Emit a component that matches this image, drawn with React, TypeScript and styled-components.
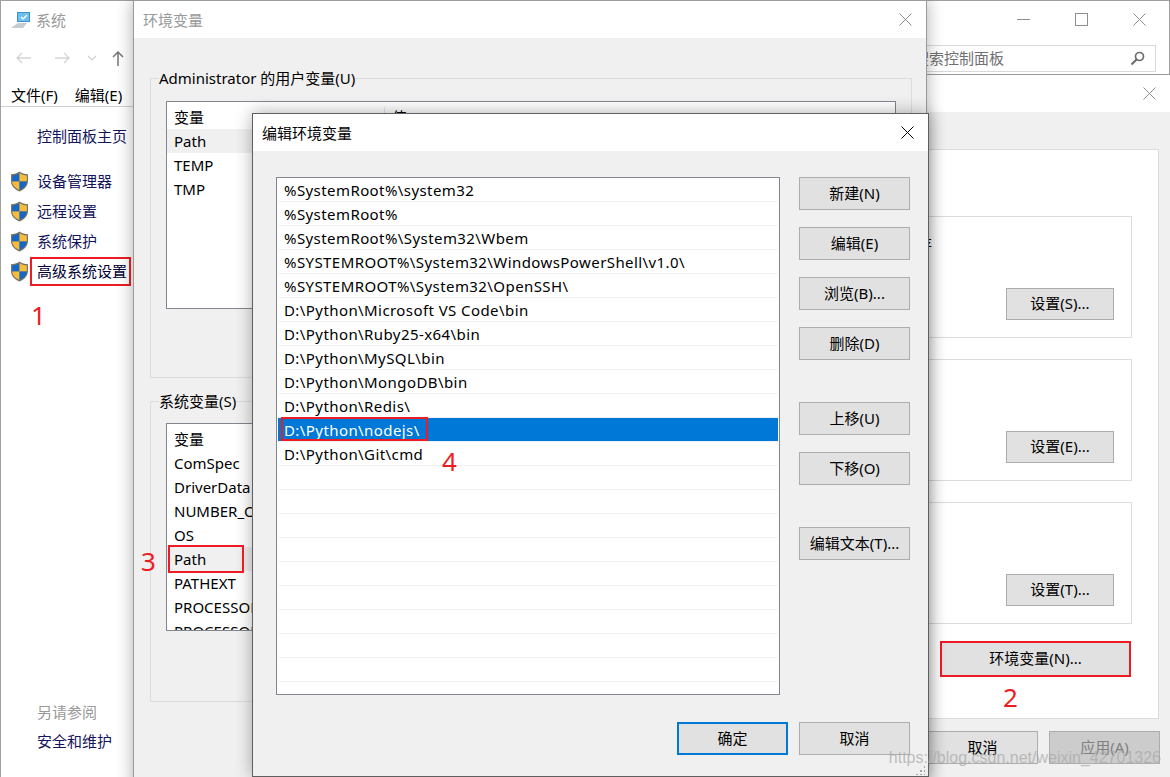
import { FC } from "react";
import styled, { createGlobalStyle } from "styled-components";

const FONT = `"Noto Sans", "Noto Sans CJK SC", sans-serif`;

const PATH_ROWS = [
	"%SystemRoot%\\system32",
	"%SystemRoot%",
	"%SystemRoot%\\System32\\Wbem",
	"%SYSTEMROOT%\\System32\\WindowsPowerShell\\v1.0\\",
	"%SYSTEMROOT%\\System32\\OpenSSH\\",
	"D:\\Python\\Microsoft VS Code\\bin",
	"D:\\Python\\Ruby25-x64\\bin",
	"D:\\Python\\MySQL\\bin",
	"D:\\Python\\MongoDB\\bin",
	"D:\\Python\\Redis\\",
	"D:\\Python\\nodejs\\",
	"D:\\Python\\Git\\cmd",
	"",
	"",
	"",
	"",
	"",
	"",
	"",
	"",
	"",
];

const USER_VARS = ["Path", "TEMP", "TMP"];
const SYSTEM_VARS = [
	"ComSpec",
	"DriverData",
	"NUMBER_OF_PROCESSORS",
	"OS",
	"Path",
	"PATHEXT",
	"PROCESSOR_ARCHITECTURE",
	"PROCESSOR_IDENTIFIER",
];

const CloseIcon: FC<{ color: string }> = ({ color }) => (
	<svg width="13" height="13" viewBox="0 0 13 13">
		<path d="M0.5 0.5 L12.5 12.5 M12.5 0.5 L0.5 12.5" stroke={color} strokeWidth="1" fill="none" />
	</svg>
);

const Shield: FC = () => (
	<svg width="19" height="21" viewBox="0 0 19 21">
		<path d="M9.5 0.5 C12 2.5 15 3.2 18 3.2 V10 C18 15 14 18.6 9.5 20.5 C5 18.6 1 15 1 10 V3.2 C4 3.2 7 2.5 9.5 0.5Z" fill="#7a7465" />
		<path d="M9.5 2 V10.5 H2.2 V4.4 C5 4.3 7.5 3.5 9.5 2Z" fill="#1467c4" />
		<path d="M9.5 2 C11.5 3.5 14 4.3 16.8 4.4 V10.5 H9.5Z" fill="#f7bd3a" />
		<path d="M2.2 10.5 H9.5 V19 C5.6 17.4 2.4 14.5 2.2 10.5Z" fill="#f7bd3a" />
		<path d="M9.5 10.5 H16.8 C16.6 14.5 13.4 17.4 9.5 19Z" fill="#1467c4" />
	</svg>
);

const SystemIcon: FC = () => (
	<svg width="21" height="18" viewBox="0 0 21 18">
		<path d="M1 17 L8 12 H17 L13 17Z" fill="#c4ccd4" />
		<path d="M7 1 H20 V11 H7Z" fill="#3f8fd6" />
		<path d="M8 2 H19 V10 H8Z" fill="#6cc0ee" />
		<path d="M11 6 L13 8 L17 4" stroke="#fff" strokeWidth="1.4" fill="none" />
	</svg>
);

const ArrowIcon: FC<{ dir: "left" | "right"; color: string }> = ({ dir, color }) => (
	<svg width="15" height="12" viewBox="0 0 15 12">
		<path
			d={dir === "left" ? "M15 6 H1 M6 1 L1 6 L6 11" : "M0 6 H14 M9 1 L14 6 L9 11"}
			stroke={color}
			strokeWidth="1.3"
			fill="none"
		/>
	</svg>
);

const App: FC = () => {
	return (
		<>
			<GlobalStyle />
			<Desktop>
				<SystemWindow>
					<TitleBar>
						<TitleGroup>
							<SystemIcon />
							<WindowTitle $inactive $bare>
								系统
							</WindowTitle>
						</TitleGroup>
						<CaptionButtons>
							<svg width="13" height="13" viewBox="0 0 13 13">
								<path d="M0 6.5 H13" stroke="#8f8f8f" fill="none" />
							</svg>
							<svg width="13" height="13" viewBox="0 0 13 13">
								<rect x="0.5" y="0.5" width="12" height="12" stroke="#8f8f8f" fill="none" />
							</svg>
							<CloseIcon color="#8f8f8f" />
						</CaptionButtons>
					</TitleBar>
					<NavBar>
						<NavIcons>
							<ArrowIcon dir="left" color="#d4d4d4" />
							<ArrowIcon dir="right" color="#d4d4d4" />
							<svg width="10" height="6" viewBox="0 0 10 6">
								<path d="M1 1 L5 5 L9 1" stroke="#cfcfcf" strokeWidth="1.2" fill="none" />
							</svg>
							<svg width="12" height="15" viewBox="0 0 12 15">
								<path d="M6 15 V1 M1 6 L6 1 L11 6" stroke="#777" strokeWidth="1.5" fill="none" />
							</svg>
						</NavIcons>
						<SearchBox>
							<SearchText>搜索控制面板</SearchText>
							<svg width="15" height="15" viewBox="0 0 15 15">
								<circle cx="9.5" cy="5.5" r="4" stroke="#6d6d6d" strokeWidth="1.7" fill="none" />
								<path d="M6.5 8.5 L1.5 13.5" stroke="#6d6d6d" strokeWidth="2.2" />
							</svg>
						</SearchBox>
					</NavBar>
					<MenuBar>
						<span>文件(F)</span>
						<span>编辑(E)</span>
					</MenuBar>
					<Sidebar>
						<HomeLink>控制面板主页</HomeLink>
						<SideLink>
							<Shield />
							<LinkText>设备管理器</LinkText>
						</SideLink>
						<SideLink>
							<Shield />
							<LinkText>远程设置</LinkText>
						</SideLink>
						<SideLink>
							<Shield />
							<LinkText>系统保护</LinkText>
						</SideLink>
						<SideLink>
							<Shield />
							<MarkedLinkText>高级系统设置</MarkedLinkText>
						</SideLink>
						<SeeAlso>另请参阅</SeeAlso>
						<FooterLink>安全和维护</FooterLink>
					</Sidebar>
				</SystemWindow>

				<PropsWindow>
					<TitleBar>
						<span />
						<CloseSlot>
							<CloseIcon color="#8f8f8f" />
						</CloseSlot>
					</TitleBar>
					<PropsBody>
						<TabPanel>
							<SettingsGroup>
								<GroupText>视觉效果，处理器计划，内存使用，以及虚拟内存</GroupText>
								<Button $width={108} $height={32}>
									设置(S)...
								</Button>
							</SettingsGroup>
							<SettingsGroup>
								<Button $width={108} $height={32}>
									设置(E)...
								</Button>
							</SettingsGroup>
							<SettingsGroup>
								<Button $width={108} $height={32}>
									设置(T)...
								</Button>
							</SettingsGroup>
							<EnvButtonRow>
								<Button $width={191} $height={36} $marked>
									环境变量(N)...
								</Button>
							</EnvButtonRow>
						</TabPanel>
						<DialogActions>
							<Button $width={111} $height={33}>
								取消
							</Button>
							<Button $width={111} $height={33} $disabled>
								应用(A)
							</Button>
						</DialogActions>
					</PropsBody>
				</PropsWindow>

				<EnvWindow>
					<TitleBar>
						<WindowTitle $inactive>环境变量</WindowTitle>
						<CloseSlot>
							<CloseIcon color="#8f8f8f" />
						</CloseSlot>
					</TitleBar>
					<EnvBody>
						<GroupBox $height={310} $listGap={13}>
							<legend>Administrator 的用户变量(U)</legend>
							<VarList>
								<VarHeader>
									<VarName>变量</VarName>
									<VarValue>值</VarValue>
								</VarHeader>
								{USER_VARS.map((name, index) => (
									<VarRow key={name} $active={index === 0}>
										{name}
									</VarRow>
								))}
							</VarList>
						</GroupBox>
						<GroupBox $height={311} $listGap={12}>
							<legend>系统变量(S)</legend>
							<VarList>
								<VarHeader>
									<VarName>变量</VarName>
									<VarValue>值</VarValue>
								</VarHeader>
								{SYSTEM_VARS.map((name) => (
									<VarRow key={name} $active={name === "Path"}>
										{name}
										{name === "Path" && <Marker $left={1} $top={-2} $width={76} $height={28} />}
									</VarRow>
								))}
							</VarList>
						</GroupBox>
					</EnvBody>
				</EnvWindow>

				<EditWindow>
					<TitleBar>
						<WindowTitle>编辑环境变量</WindowTitle>
						<CloseSlot>
							<CloseIcon color="#000" />
						</CloseSlot>
					</TitleBar>
					<EditBody>
						<EditMain>
							<PathList>
								{PATH_ROWS.map((row, index) => (
									<PathRow key={index} $selected={row.includes("nodejs")}>
										{row}
										{row.includes("nodejs") && <Marker $left={3} $top={-1} $width={147} $height={24} />}
									</PathRow>
								))}
							</PathList>
							<SideButtons>
								<Button $width={111} $height={33}>
									新建(N)
								</Button>
								<Button $width={111} $height={33}>
									编辑(E)
								</Button>
								<Button $width={111} $height={33}>
									浏览(B)...
								</Button>
								<Button $width={111} $height={33}>
									删除(D)
								</Button>
								<MoveButtons>
									<Button $width={111} $height={33}>
										上移(U)
									</Button>
									<Button $width={111} $height={33}>
										下移(O)
									</Button>
								</MoveButtons>
								<EditTextSlot>
									<Button $width={111} $height={33}>
										编辑文本(T)...
									</Button>
								</EditTextSlot>
							</SideButtons>
						</EditMain>
						<EditActions>
							<Button $width={111} $height={33} $primary>
								确定
							</Button>
							<Button $width={111} $height={33}>
								取消
							</Button>
						</EditActions>
					</EditBody>
					<Grip />
				</EditWindow>

				<Callout $x={31} $y={297}>
					1
				</Callout>
				<Callout $x={1003} $y={679}>
					2
				</Callout>
				<Callout $x={141} $y={543}>
					3
				</Callout>
				<Callout $x={442} $y={443}>
					4
				</Callout>
				<Watermark>https://blog.csdn.net/weixin_42701326</Watermark>
			</Desktop>
		</>
	);
};

export default App;

const GlobalStyle = createGlobalStyle`
	html,
	body {
		margin: 0;
		padding: 0;
		background: #ffffff;
	}

	* {
		box-sizing: border-box;
	}
`;

const Desktop = styled.div`
	position: relative;
	width: 1170px;
	height: 777px;
	overflow: hidden;
	background: #ffffff;
	font-family: ${FONT};
	font-size: 15px;
	line-height: 20px;
	color: #000000;
`;

const SystemWindow = styled.div`
	position: absolute;
	inset: 0;
	display: flex;
	flex-direction: column;
	background: #ffffff;
	border: 1px solid #a0a0a0;
	border-bottom: 0;
`;

const TitleBar = styled.div`
	display: flex;
	align-items: center;
	justify-content: space-between;
	flex: 0 0 37px;
	background: #ffffff;
`;

const TitleGroup = styled.div`
	display: flex;
	align-items: center;
	gap: 5px;
	padding-left: 9px;
`;

const WindowTitle = styled.span<{ $inactive?: boolean; $bare?: boolean }>`
	color: ${(p) => (p.$inactive ? "#999999" : "#000000")};
	padding-left: ${(p) => (p.$bare ? 0 : 9)}px;
`;

const CaptionButtons = styled.div`
	display: flex;
	align-items: center;
	gap: 45px;
	padding-right: 23px;
`;

const CloseSlot = styled.div`
	display: flex;
	padding-right: 14px;
`;

const NavBar = styled.div`
	display: flex;
	align-items: center;
	justify-content: space-between;
	flex: 0 0 40px;
	padding-right: 13px;
`;

const NavIcons = styled.div`
	display: flex;
	align-items: center;
	gap: 24px;
	padding-left: 15px;

	svg:nth-child(3) {
		margin-left: -7px;
	}

	svg:nth-child(4) {
		margin-left: -9px;
	}
`;

const SearchBox = styled.div`
	display: flex;
	align-items: center;
	justify-content: space-between;
	width: 266px;
	height: 27px;
	padding: 0 10px 0 23px;
	border: 1px solid #d9d9d9;
`;

const SearchText = styled.span`
	color: #707070;
`;

const MenuBar = styled.div`
	display: flex;
	gap: 17px;
	flex: 0 0 29px;
	padding: 7px 0 0 10px;
	border-bottom: 1px solid #d0d0d0;
	width: 133px;
	white-space: nowrap;
`;

const Sidebar = styled.div`
	display: flex;
	flex-direction: column;
	flex: 1;
	width: 132px;
	padding: 17px 0 26px 9px;
`;

const HomeLink = styled.div`
	height: 24px;
	margin-bottom: 18px;
	padding: 2px 0 0 27px;
	color: #14145a;
	white-space: nowrap;
`;

const SideLink = styled.div`
	display: flex;
	align-items: center;
	height: 30px;
	gap: 8px;
	white-space: nowrap;
`;

const LinkText = styled.span`
	color: #14145a;
`;

const MarkedLinkText = styled(LinkText)`
	display: inline-flex;
	align-items: center;
	height: 29px;
	margin-left: -7px;
	padding: 0 4px 0 7px;
	color: #000033;
	outline: 2px solid #ed1c24;
	outline-offset: -2px;
`;

const SeeAlso = styled.div`
	margin-top: auto;
	padding-left: 27px;
	color: #999999;
`;

const FooterLink = styled.div`
	margin-top: 9px;
	padding-left: 27px;
	color: #14145a;
	white-space: nowrap;
`;

const FloatingWindow = styled.div`
	position: absolute;
	display: flex;
	flex-direction: column;
	background: #f0f0f0;
	border: 1px solid #9a9a9a;
	box-shadow: 0 0 16px rgba(0, 0, 0, 0.32);
`;

const PropsWindow = styled(FloatingWindow)`
	left: 556px;
	top: 74px;
	width: 614px;
	height: 720px;
	box-shadow: none;
	border-right: 0;
`;

const PropsBody = styled.div`
	display: flex;
	flex-direction: column;
	flex: 1;
	padding: 37px 11px 0 10px;
`;

const TabPanel = styled.div`
	display: flex;
	flex-direction: column;
	gap: 21px;
	height: 570px;
	padding: 66px 26px 0 40px;
	background: #ffffff;
	border: 1px solid #dcdcdc;
`;

const SettingsGroup = styled.div`
	position: relative;
	display: flex;
	flex-direction: column;
	justify-content: flex-end;
	align-items: flex-end;
	height: 122px;
	padding: 0 17px 17px 0;
	border: 1px solid #dcdcdc;
`;

const GroupText = styled.div`
	margin: auto auto 34px -7px;
	white-space: nowrap;
`;

const EnvButtonRow = styled.div`
	display: flex;
	justify-content: flex-end;
	margin-top: -4px;
	margin-right: 1px;
`;

const DialogActions = styled.div`
	display: flex;
	justify-content: flex-end;
	gap: 11px;
	padding: 12px 0 0 0;
	margin-right: -1px;
`;

const Button = styled.div<{
	$width: number;
	$height: number;
	$primary?: boolean;
	$disabled?: boolean;
	$marked?: boolean;
}>`
	display: flex;
	align-items: center;
	justify-content: center;
	flex: 0 0 auto;
	width: ${(p) => p.$width}px;
	height: ${(p) => p.$height}px;
	padding-bottom: 2px;
	background: ${(p) => (p.$disabled ? "#cccccc" : "#e1e1e1")};
	color: ${(p) => (p.$disabled ? "#808080" : "#000000")};
	border: ${(p) => (p.$primary ? "2px solid #0078d7" : "1px solid #adadad")};
	outline: ${(p) => (p.$marked ? "2px solid #ed1c24" : "none")};
	outline-offset: -2px;
	white-space: nowrap;
`;

const EnvWindow = styled(FloatingWindow)`
	left: 133px;
	top: 0;
	width: 794px;
	height: 790px;
`;

const EnvBody = styled.div`
	display: flex;
	flex-direction: column;
	gap: 13px;
	flex: 1;
	padding: 30px 14px 0 16px;
`;

const GroupBox = styled.fieldset<{ $height: number; $listGap: number }>`
	height: ${(p) => p.$height}px;
	margin: 0;
	min-width: 0;
	padding: ${(p) => p.$listGap}px 15px 0 15px;
	border: 1px solid #dcdcdc;

	legend {
		margin-left: -7px;
		padding: 0;
		height: 20px;
		white-space: nowrap;
	}
`;

const VarList = styled.div`
	height: 208px;
	overflow: hidden;
	background: #ffffff;
	border: 1px solid #82878f;
`;

const VarHeader = styled.div`
	display: flex;
	align-items: center;
	height: 27px;
	padding-top: 3px;
`;

const VarName = styled.div`
	width: 218px;
	padding-left: 7px;
	border-right: 1px solid #e5e5e5;
`;

const VarValue = styled.div`
	padding-left: 7px;
`;

const VarRow = styled.div<{ $active?: boolean }>`
	position: relative;
	height: 24px;
	line-height: 24px;
	padding-left: 7px;
	background: ${(p) => (p.$active ? "#f0f0f0" : "#ffffff")};
	white-space: nowrap;
`;

const Marker = styled.span<{ $left: number; $top: number; $width: number; $height: number }>`
	position: absolute;
	z-index: 1;
	left: ${(p) => p.$left}px;
	top: ${(p) => p.$top}px;
	width: ${(p) => p.$width}px;
	height: ${(p) => p.$height}px;
	border: 2px solid #ed1c24;
`;

const EditWindow = styled(FloatingWindow)`
	left: 252px;
	top: 113px;
	width: 677px;
	height: 664px;
	border-color: #5f5f5f;
`;

const EditBody = styled.div`
	display: flex;
	flex-direction: column;
	flex: 1;
	padding: 26px 18px 0 23px;
`;

const EditMain = styled.div`
	display: flex;
	gap: 19px;
`;

const PathList = styled.div`
	width: 504px;
	height: 518px;
	padding: 0 1px;
	overflow: hidden;
	background: #ffffff;
	border: 1px solid #82878f;
`;

const PathRow = styled.div<{ $selected?: boolean }>`
	position: relative;
	height: 24px;
	line-height: 24px;
	padding-left: 6px;
	letter-spacing: 0.42px;
	background: ${(p) => (p.$selected ? "#0078d7" : "#ffffff")};
	color: ${(p) => (p.$selected ? "#ffffff" : "#000000")};
	border-bottom: 1px solid #f0f0f0;
	white-space: nowrap;
`;

const SideButtons = styled.div`
	display: flex;
	flex-direction: column;
	gap: 17px;
`;

const MoveButtons = styled.div`
	display: flex;
	flex-direction: column;
	gap: 17px;
	margin-top: 25px;
`;

const EditTextSlot = styled.div`
	margin-top: 25px;
`;

const EditActions = styled.div`
	display: flex;
	justify-content: flex-end;
	gap: 11px;
	margin-top: 27px;
`;

const Grip = styled.div`
	position: absolute;
	right: 3px;
	bottom: 1px;
	width: 10px;
	height: 10px;
	background-image: radial-gradient(circle, #a8a8a8 1px, transparent 1.2px);
	background-size: 4px 4px;
	clip-path: polygon(100% 0, 100% 100%, 0 100%);
`;

const Callout = styled.span<{ $x: number; $y: number }>`
	position: absolute;
	left: ${(p) => p.$x}px;
	top: ${(p) => p.$y}px;
	font-size: 26px;
	line-height: 36px;
	color: #ed1c24;
`;

const Watermark = styled.span`
	position: absolute;
	right: 9px;
	bottom: 9px;
	font-family: "Liberation Sans", sans-serif;
	font-size: 16px;
	line-height: 20px;
	color: rgba(170, 170, 170, 0.75);
	white-space: nowrap;
	pointer-events: none;
`;
